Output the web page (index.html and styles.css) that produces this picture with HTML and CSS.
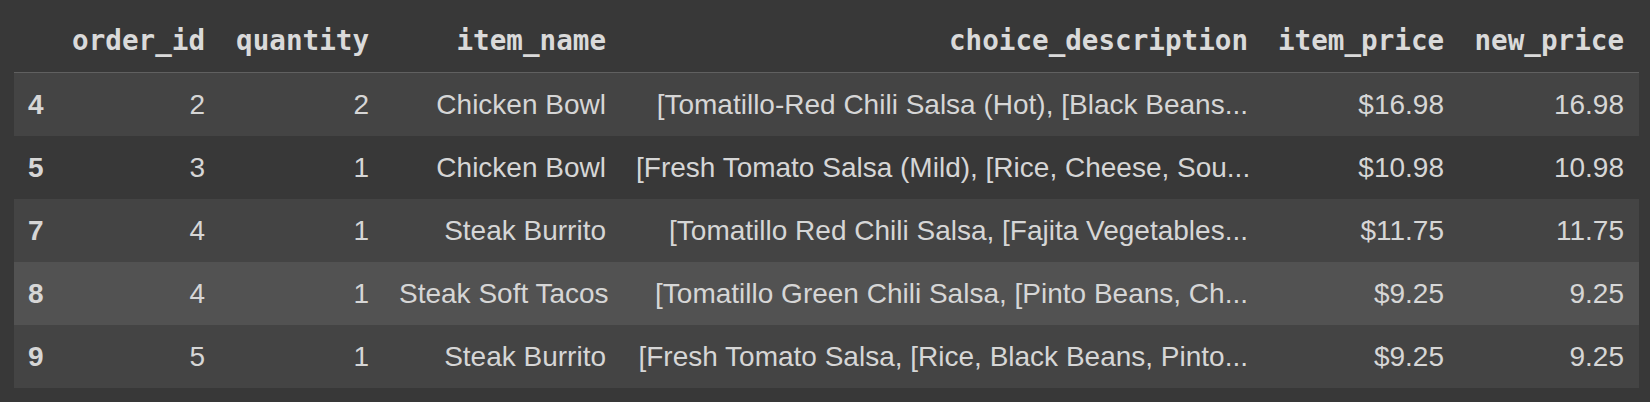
FILE: index.html
```html
<!DOCTYPE html>
<html>
<head>
<meta charset="utf-8">
<link rel="stylesheet" href="styles.css">
</head>
<body>
<div class="wrap">
<table class="df">
  <colgroup>
    <col class="c-idx"><col class="c-oid"><col class="c-qty"><col class="c-name"><col class="c-desc"><col class="c-price"><col class="c-new">
  </colgroup>
  <thead>
    <tr><th></th><th>order_id</th><th>quantity</th><th>item_name</th><th>choice_description</th><th>item_price</th><th>new_price</th></tr>
  </thead>
  <tbody>
    <tr class="even"><th>4</th><td>2</td><td>2</td><td>Chicken Bowl</td><td>[Tomatillo-Red Chili Salsa (Hot), [Black Beans...</td><td>$16.98</td><td>16.98</td></tr>
    <tr class="odd"><th>5</th><td>3</td><td>1</td><td>Chicken Bowl</td><td>[Fresh Tomato Salsa (Mild), [Rice, Cheese, Sou...</td><td>$10.98</td><td>10.98</td></tr>
    <tr class="even"><th>7</th><td>4</td><td>1</td><td>Steak Burrito</td><td>[Tomatillo Red Chili Salsa, [Fajita Vegetables...</td><td>$11.75</td><td>11.75</td></tr>
    <tr class="hover"><th>8</th><td>4</td><td>1</td><td>Steak Soft Tacos</td><td>[Tomatillo Green Chili Salsa, [Pinto Beans, Ch...</td><td>$9.25</td><td>9.25</td></tr>
    <tr class="even"><th>9</th><td>5</td><td>1</td><td>Steak Burrito</td><td>[Fresh Tomato Salsa, [Rice, Black Beans, Pinto...</td><td>$9.25</td><td>9.25</td></tr>
  </tbody>
</table>
</div>
</body>
</html>
```

FILE: styles.css
```css
html, body {
  margin: 0;
  padding: 0;
  background: #383838;
  width: 1650px;
  height: 402px;
  overflow: hidden;
}
.wrap {
  padding-left: 14px;
}
.df {
  border-collapse: collapse;
  table-layout: fixed;
  width: 1625px;
  color: #d6d6d6;
  font-family: "Liberation Sans", Arial, sans-serif;
  font-size: 28px;
}
.c-idx { width: 43px; }
.c-oid { width: 163px; }
.c-qty { width: 164px; }
.c-name { width: 237px; }
.c-desc { width: 642px; }
.c-price { width: 196px; }
.c-new { width: 180px; }

.df thead th {
  height: 57px;
  padding: 0 15px 15px 15px;
  vertical-align: bottom;
  text-align: right;
  font-family: "DejaVu Sans Mono", "Liberation Mono", monospace;
  font-weight: bold;
  font-size: 27.6px;
  line-height: 32px;
  color: #dadada;
  border-bottom: 1px solid #606060;
  white-space: nowrap;
}
.df tbody td, .df tbody th {
  height: 63px;
  padding: 0 15px;
  text-align: right;
  vertical-align: middle;
  white-space: nowrap;
  overflow: hidden;
  line-height: 32px;
}
.df tbody th {
  text-align: left;
  font-weight: bold;
  padding-left: 14px;
  padding-right: 0;
}
.df tr.even { background: #444444; }
.df tr.odd { background: #383838; }
.df tr.hover { background: #525252; }
```
